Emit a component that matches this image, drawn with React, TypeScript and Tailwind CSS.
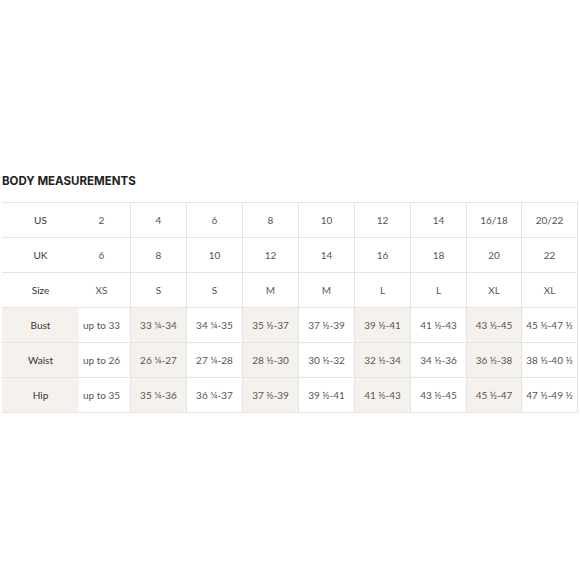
import React from "react";

const rows: { label: string; values: string[]; shaded: boolean }[] = [
  { label: "US", values: ["2", "4", "6", "8", "10", "12", "14", "16/18", "20/22"], shaded: false },
  { label: "UK", values: ["6", "8", "10", "12", "14", "16", "18", "20", "22"], shaded: false },
  { label: "Size", values: ["XS", "S", "S", "M", "M", "L", "L", "XL", "XL"], shaded: false },
  { label: "Bust", values: ["up to 33", "33 ¼-34", "34 ¼-35", "35 ½-37", "37 ½-39", "39 ½-41", "41 ½-43", "43 ½-45", "45 ½-47 ½"], shaded: true },
  { label: "Waist", values: ["up to 26", "26 ¼-27", "27 ¼-28", "28 ½-30", "30 ½-32", "32 ½-34", "34 ½-36", "36 ½-38", "38 ½-40 ½"], shaded: true },
  { label: "Hip", values: ["up to 35", "35 ¼-36", "36 ¼-37", "37 ½-39", "39 ½-41", "41 ½-43", "43 ½-45", "45 ½-47", "47 ½-49 ½"], shaded: true },
];

export default function App() {
  return (
    <div
      className="w-[580px] h-[580px] bg-white pt-[174px] pl-[2px]"
      style={{ fontFamily: "Lato, 'Open Sans', sans-serif" }}
    >
      <h2
        className="text-[11.5px] font-bold text-[#222] leading-[14px]"
        style={{ fontFamily: "Inter, sans-serif" }}
      >
        BODY MEASUREMENTS
      </h2>
      <div className="mt-[14px] w-[576px] border-t border-[#e4e4e4] grid grid-cols-[77px_51px_56px_56px_56px_56px_56px_56px_55px_57px]">
        {rows.map((r) => (
          <React.Fragment key={r.label}>
            <div
              className={`h-[35px] border-b border-[#e4e4e4] flex items-center justify-center text-[10px] text-[#333] ${r.shaded ? "bg-[#f5f2ed]" : "bg-white"}`}
            >
              {r.label}
            </div>
            {r.values.map((v, i) => (
              <div
                key={i}
                className={`h-[35px] border-b border-[#e4e4e4] flex items-center justify-center whitespace-nowrap text-[10px] text-[#555] ${i === 0 ? "pr-[6px]" : "border-l"} ${i === 8 ? "border-r" : ""} ${r.shaded && i % 2 === 1 ? "bg-[#f5f2ed]" : "bg-white"}`}
              >
                {v}
              </div>
            ))}
          </React.Fragment>
        ))}
      </div>
    </div>
  );
}
